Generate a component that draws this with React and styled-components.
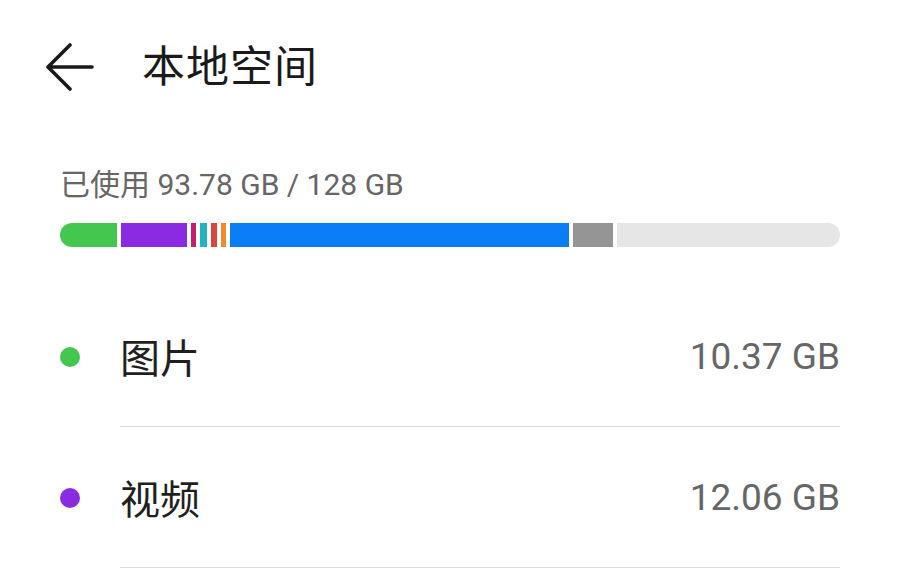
import React from "react";
import styled, { createGlobalStyle } from "styled-components";

const GlobalStyle = createGlobalStyle`
  body {
    margin: 0;
    background: #ffffff;
    font-family: Roboto, "Noto Sans CJK SC", sans-serif;
  }
`;

const Page = styled.div`
  width: 900px;
  height: 586px;
  overflow: hidden;
  background: #ffffff;
`;

const Header = styled.div`
  display: flex;
  align-items: center;
  height: 48px;
  padding: 43px 0 0 46px;
`;

const BackButton = styled.button`
  width: 48px;
  height: 48px;
  padding: 0;
  border: none;
  background: none;
  display: flex;
`;

const Title = styled.h1`
  margin: 0 0 0 48px;
  font-size: 43px;
  line-height: 48px;
  font-weight: 400;
  color: #1a1a1a;
  letter-spacing: 1px;
`;

const Summary = styled.div`
  padding: 0 60px;
  margin-top: 77px;
`;

const UsedText = styled.div`
  font-size: 30px;
  line-height: 34px;
  color: #666666;
`;

const Bar = styled.div`
  display: flex;
  gap: 4px;
  height: 24px;
  margin-top: 21px;
  border-radius: 12px;
  overflow: hidden;
`;

const Segment = styled.div`
  flex: ${(p) => (p.$w ? `0 0 ${p.$w}px` : "1")};
  background: ${(p) => p.$color};
`;

const List = styled.div`
  padding: 0 60px;
  margin-top: 39px;
`;

const Row = styled.div`
  display: flex;
  align-items: stretch;
`;

const DotCell = styled.div`
  width: 60px;
  display: flex;
  align-items: center;
`;

const Dot = styled.span`
  width: 20px;
  height: 20px;
  border-radius: 50%;
  background: ${(p) => p.$color};
`;

const RowBody = styled.div`
  flex: 1;
  height: 140px;
  display: flex;
  align-items: center;
  justify-content: space-between;
  border-bottom: 1px solid #dcdcdc;
`;

const Label = styled.span`
  font-size: 40px;
  color: #1f1f1f;
`;

const Value = styled.span`
  font-size: 37px;
  color: #666666;
`;

const segments = [
  { color: "#43c74e", w: 57 },
  { color: "#8a2be2", w: 66 },
  { color: "#c2206c", w: 5 },
  { color: "#22b2c2", w: 7 },
  { color: "#d9443f", w: 6 },
  { color: "#f08a2e", w: 5 },
  { color: "#0a7ef6", w: 339 },
  { color: "#959595", w: 40 },
  { color: "#e6e6e6" },
];

const items = [
  { name: "图片", size: "10.37 GB", color: "#43c74e" },
  { name: "视频", size: "12.06 GB", color: "#8a2be2" },
];

const BackArrow = () => (
  <svg width="48" height="48" viewBox="0 0 48 48" fill="none">
    <path
      d="M2 24 H46 M24 2 L2 24 L24 46"
      stroke="#1a1a1a"
      strokeWidth="3.6"
      strokeLinecap="round"
      strokeLinejoin="round"
    />
  </svg>
);

export default function App() {
  return (
    <Page>
      <GlobalStyle />
      <Header>
        <BackButton>
          <BackArrow />
        </BackButton>
        <Title>本地空间</Title>
      </Header>

      <Summary>
        <UsedText>已使用 93.78 GB / 128 GB</UsedText>
        <Bar>
          {segments.map((s, i) => (
            <Segment key={i} $color={s.color} $w={s.w} />
          ))}
        </Bar>
      </Summary>

      <List>
        {items.map((item) => (
          <Row key={item.name}>
            <DotCell>
              <Dot $color={item.color} />
            </DotCell>
            <RowBody>
              <Label>{item.name}</Label>
              <Value>{item.size}</Value>
            </RowBody>
          </Row>
        ))}
      </List>
    </Page>
  );
}
